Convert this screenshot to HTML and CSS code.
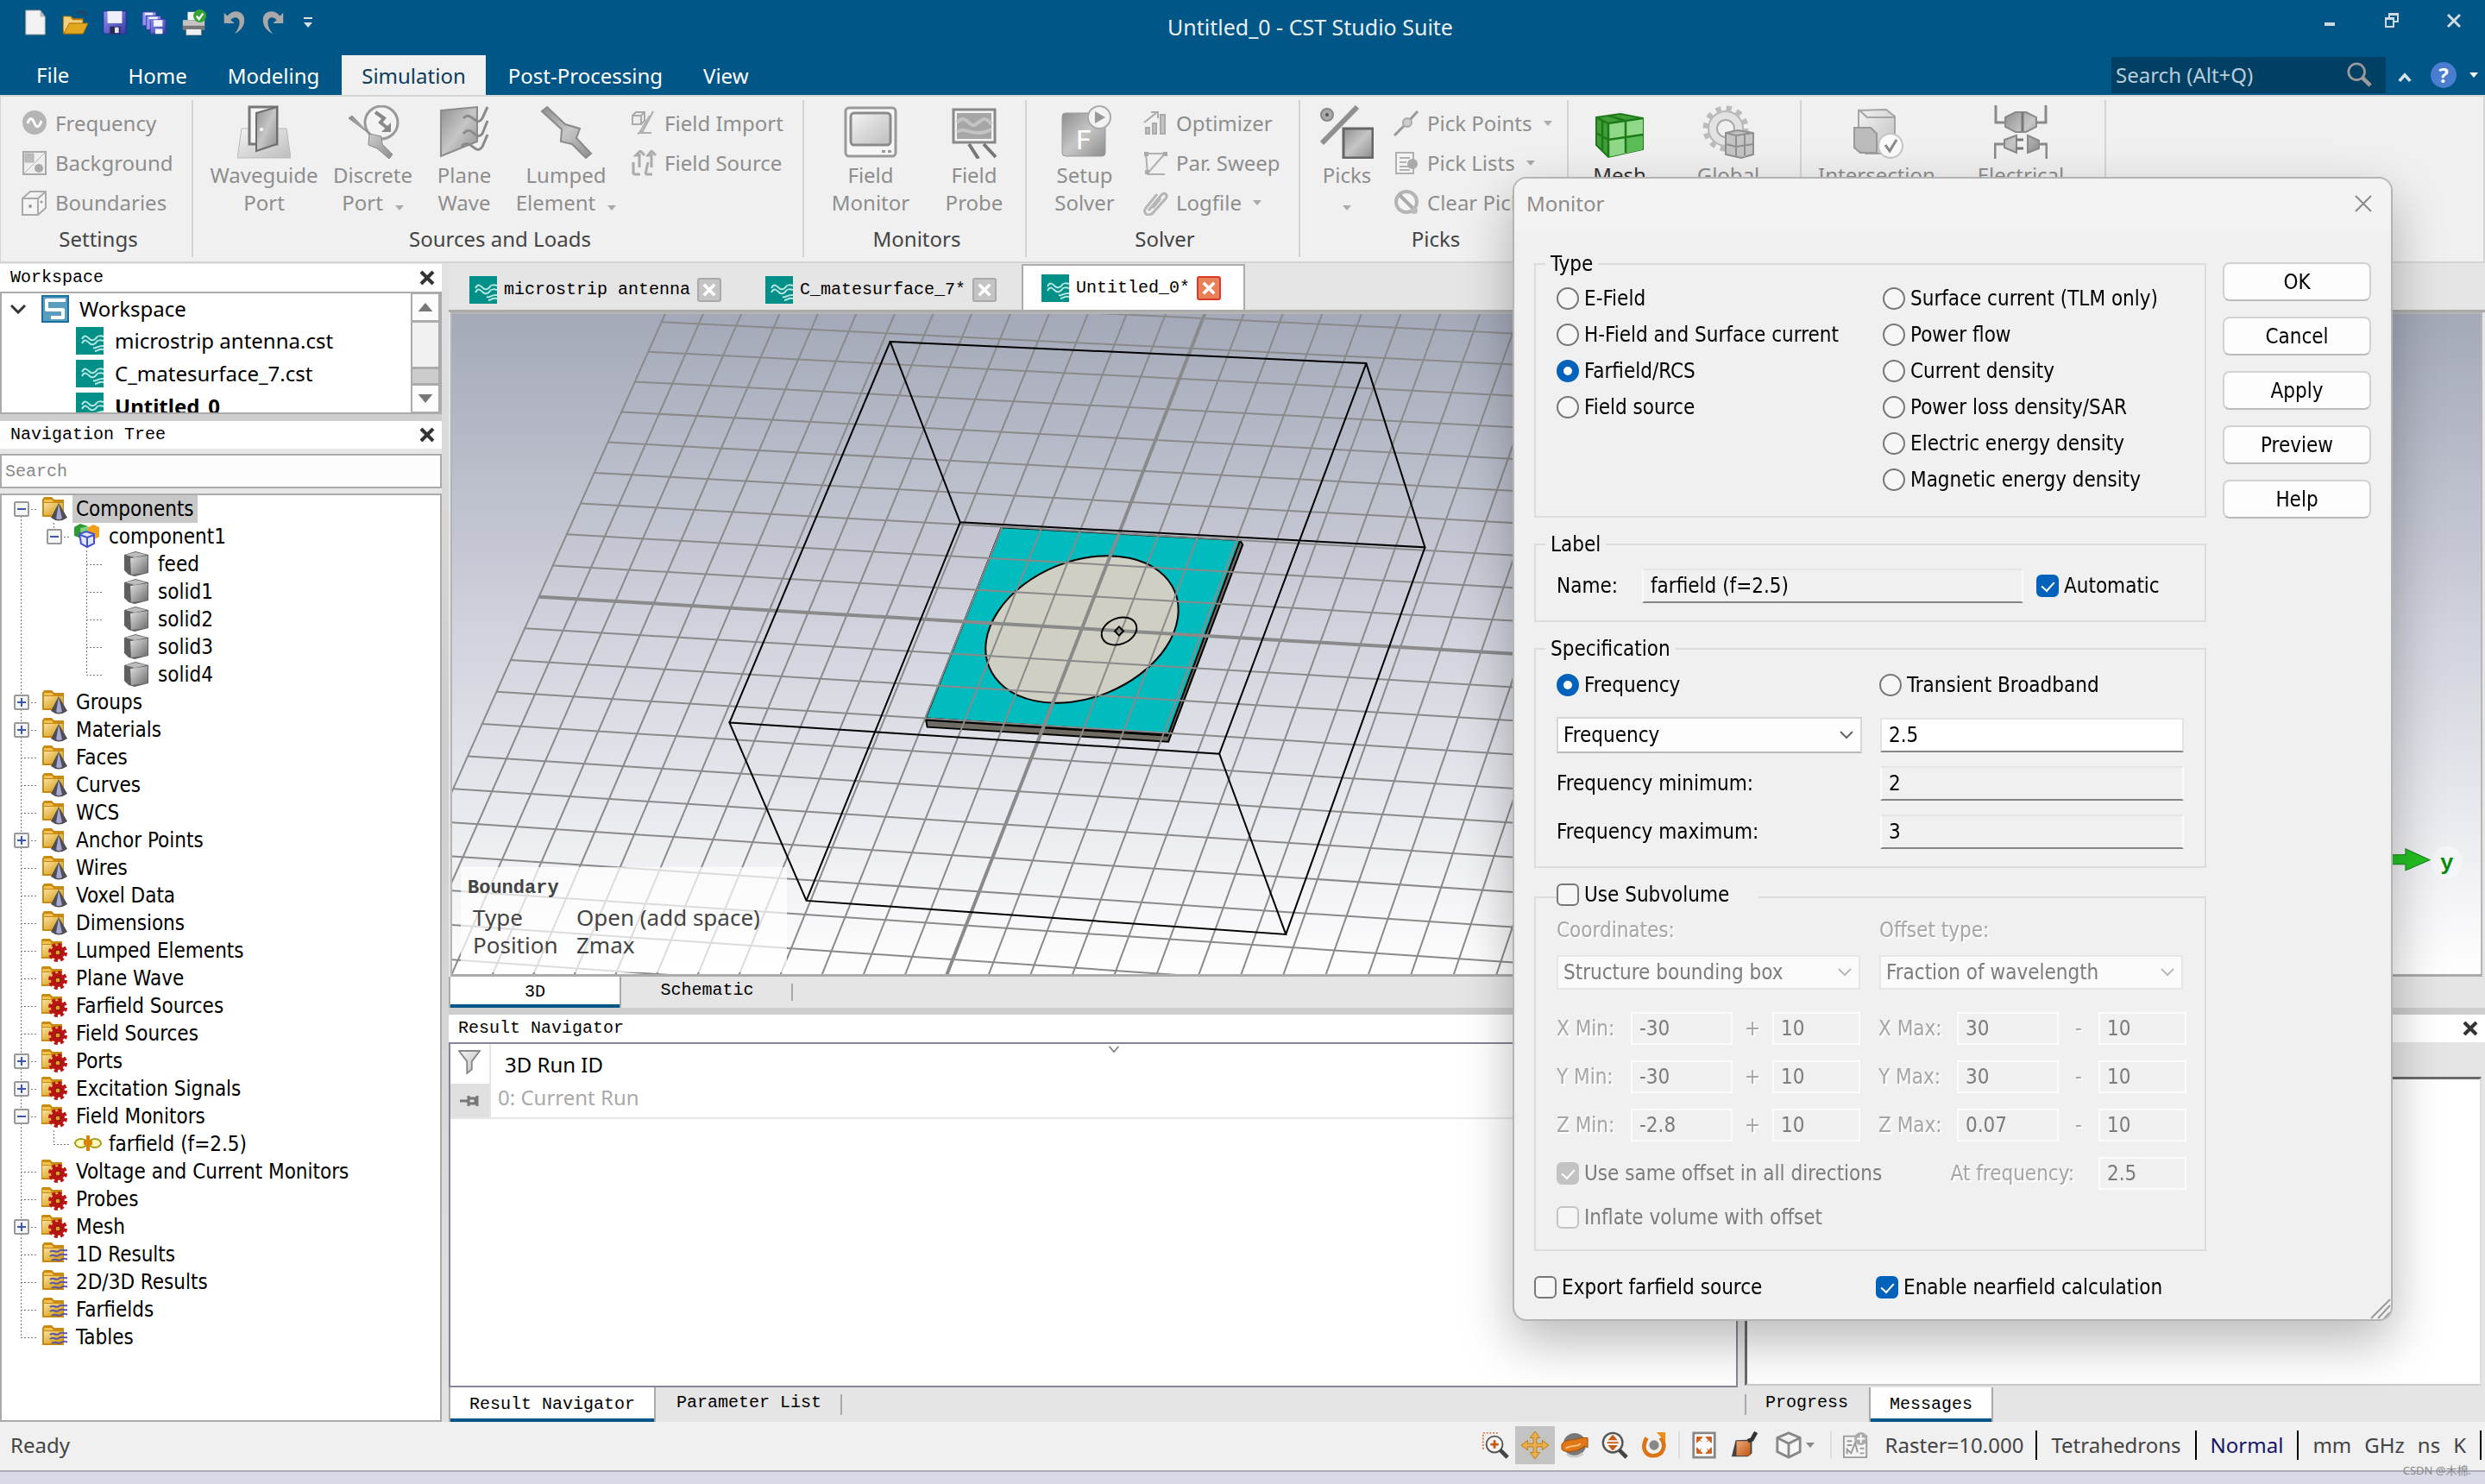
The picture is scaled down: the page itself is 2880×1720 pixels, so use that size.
FILE: index.html
```html
<!DOCTYPE html>
<html lang="en">
<head>
<meta charset="utf-8">
<title>Untitled_0 - CST Studio Suite</title>
<link rel="stylesheet" href="styles.css">
</head>
<body>
<svg class="defs" aria-hidden="true">
  <defs>
    <linearGradient id="gGray" x1="0" y1="0" x2="1" y2="1"><stop offset="0" stop-color="#8f8f8f"/><stop offset=".5" stop-color="#c6c6c6"/><stop offset="1" stop-color="#8d8d8d"/></linearGradient>
    <linearGradient id="gLight" x1="0" y1="0" x2="1" y2="1"><stop offset="0" stop-color="#f4f4f4"/><stop offset="1" stop-color="#bdbdbd"/></linearGradient>
    <linearGradient id="gFold" x1="0" y1="0" x2="1" y2="1"><stop offset="0" stop-color="#f6dfa0"/><stop offset="1" stop-color="#d39400"/></linearGradient>
    <linearGradient id="gCube" x1="0" y1="0" x2="1" y2="1"><stop offset="0" stop-color="#e2e2e2"/><stop offset="1" stop-color="#6c6c6c"/></linearGradient>
    <linearGradient id="gOr" x1="0" y1="0" x2="1" y2="1"><stop offset="0" stop-color="#f0a878"/><stop offset="1" stop-color="#c05812"/></linearGradient>
    <linearGradient id="gSave" x1="0" y1="0" x2="1" y2="1"><stop offset="0" stop-color="#8e93ee"/><stop offset="1" stop-color="#3a3aa8"/></linearGradient>
    <symbol id="caret" viewBox="0 0 10 6"><path d="M0 0h10L5 6z" fill="currentColor"/></symbol>
    <symbol id="cross" viewBox="0 0 18 18"><path d="M2 2l14 14M16 2L2 16" stroke="currentColor" stroke-width="4" fill="none"/></symbol>
    <symbol id="wave" viewBox="0 0 32 32"><path d="M0 0h32v32H0z" fill="#009088"/><path d="M7 14c3-6 6-3 9 0s7 0 8-2 5-2 8-1M7 19c3-6 6-3 9 0s7 0 8-2 5-2 8-1M20 24c4 2 5-3 12-2M22 28c3 0 4-3 10-2" fill="none" stroke="#b8e6e3" stroke-width="2"/></symbol>
    <symbol id="folder" viewBox="0 0 32 32"><path d="M1 4l2-3h9l3 3h11v20H1z" fill="#c98a10"/><path d="M3 4h9l2 3H3z" fill="#f0c050"/><path d="M3 8h22v14H3z" fill="url(#gFold)"/></symbol>
    <symbol id="f-cone" viewBox="0 0 32 32"><use href="#folder"/><path d="M20 8l10 17q-10 7-19 0z" fill="#4e4e54"/><path d="M20 9l4 17q-4 2-7 0z" fill="#a8a8d6"/></symbol>
    <symbol id="f-gear" viewBox="0 0 32 32"><use href="#folder" x="-2"/><circle cx="19" cy="17" r="8" fill="#b81414"/><circle cx="19" cy="17" r="9" fill="none" stroke="#b81414" stroke-width="4" stroke-dasharray="4 3.07"/><circle cx="19" cy="17" r="3" fill="#e0a020" stroke="#7c0c0c"/></symbol>
    <symbol id="f-wave" viewBox="0 0 32 32"><use href="#folder"/><path d="M10 12c4-4 6 2 10-1s6 0 10-1M10 17c4-4 6 2 10-1s6 0 10-1M12 22c4-4 7 2 11-1s4 0 7-1" fill="none" stroke="#5a55a0" stroke-width="2"/></symbol>
    <symbol id="solid" viewBox="0 0 32 32"><path d="M1 4L14 0l15 4v21L13 29 6 27 1 22z" fill="#5f5f5f"/><path d="M2 4l12-3 13 3-14 3z" fill="#bdbdbd"/><path d="M8 8l20-3v20L9 27z" fill="url(#gCube)"/></symbol>
    <symbol id="comp" viewBox="0 0 32 32"><path d="M15 5l7-4 7 3v11l-7 4-7-4z" fill="#f2a018"/><path d="M0 4l7-4 9 3v10l-8 4-8-3z" fill="#2f9a34"/><path d="M7 5l9-2v10l-8 4z" fill="#7fd47f"/><path d="M6 12l8-3 9 3v11l-8 4-7-4z" fill="#dfe6ff" stroke="#4450c8" stroke-width="2"/><path d="M7 13l8 3 8-3M15 16v10" fill="none" stroke="#4450c8" stroke-width="2"/></symbol>
    <symbol id="far" viewBox="0 0 32 32"><ellipse cx="8" cy="14" rx="7" ry="5" fill="#fbf8c0" stroke="#a89c10" stroke-width="2"/><ellipse cx="24" cy="14" rx="7" ry="5" fill="#fbf8c0" stroke="#a89c10" stroke-width="2"/><path d="M14 5h4v6h3v5h-3v7h-4v-7h-3v-5h3z" fill="#dc8200"/></symbol>
  </defs>
</svg>

<div class="app">
<header class="titlebar">
  <div class="qat">
    <button aria-label="New"><svg viewBox="0 0 32 32"><path d="M4 1h18l6 8v22H4z" fill="#f2f2f2" stroke="#9a9a9a"/><path d="M22 1v8h6z" fill="#b8b8b8"/></svg></button>
    <button aria-label="Open"><svg viewBox="0 0 32 32"><path d="M1 8h10l3 3h12v19H1z" fill="#b87800"/><path d="M2 9h8l3 4h12v15H2z" fill="#f3cf7c"/><path d="M2 30l7-13h23l-6 13z" fill="#e3a820" stroke="#a06a00"/><path d="M18 5c3-4 9-4 11 2l2-3" fill="none" stroke="#2b3f55" stroke-width="2"/></svg></button>
    <button aria-label="Save"><svg viewBox="0 0 32 32"><path d="M2 2h28v28H4l-2-2z" fill="url(#gSave)" stroke="#2b2b8c"/><path d="M7 2h18v15H7z" fill="#eef0ff"/><path d="M10 21h13v9H10z" fill="#2a2a50"/><path d="M16 22h5v7h-5z" fill="#e4e4ee"/></svg></button>
    <button aria-label="Save all"><svg viewBox="0 0 32 32"><g stroke="#3a3aa0" fill="#8e93ee"><path d="M1 3h17v17H1z"/><path d="M6 8h18v17H6z"/><path d="M11 12h19v18H11z" fill="url(#gSave)"/></g><path d="M4 4h10v3H4zM9 9h11v3H9zM15 13h11v8H15zM17 24h9v6h-9z" fill="#f0f2ff"/></svg></button>
    <button aria-label="Print"><svg viewBox="0 0 32 32"><path d="M8 3h13v10H8z" fill="#f4f4f4"/><path d="M2 13h27v12H2z" fill="#c4c4c4"/><path d="M2 20h27v5H2z" fill="#777"/><path d="M6 24h19v8H6z" fill="#eee" stroke="#777"/><circle cx="23" cy="8" r="8" fill="#35a435"/><path d="M19 8l3 4 5-7" fill="none" stroke="#fff" stroke-width="2.5"/></svg></button>
    <button aria-label="Undo"><svg viewBox="0 0 32 32"><path d="M4 4v13h13l-5-4c4-5 11-4 11 3 0 5-2 9-6 14 8-4 12-10 12-17C29 1 15-1 8 8z" fill="#a9a9a9"/></svg></button>
    <button aria-label="Redo"><svg viewBox="0 0 32 32"><path d="M28 4v13H15l5-4c-4-5-11-4-11 3 0 5 2 9 6 14-8-4-12-10-12-17C3 1 17-1 24 8z" fill="#a9a9a9"/></svg></button>
    <button class="more" aria-label="Customize"><svg viewBox="0 0 10 12"><path d="M0 0h10v2H0zM0 6h10l-5 6z" fill="#d8e0e8"/></svg></button>
  </div>
  <h1>Untitled_0 - CST Studio Suite</h1>
  <div class="win">
    <button aria-label="Minimize"><svg viewBox="0 0 20 20"><path d="M4 12h12v4H4z" fill="#cfd9e0"/></svg></button>
    <button aria-label="Restore"><svg viewBox="0 0 20 20"><path d="M7 6V2h10v9h-4M3 8h9v9H3z" fill="none" stroke="#cfd9e0" stroke-width="2"/><path d="M2 6h11v3H2zM6 1h12v3H6z" fill="#cfd9e0"/></svg></button>
    <button aria-label="Close"><svg viewBox="0 0 20 20"><path d="M3 3l14 14M17 3L3 17" stroke="#cfd9e0" stroke-width="3"/></svg></button>
  </div>
</header>
<nav class="tabs">
  <button class="file">File</button><button>Home</button><button>Modeling</button><button class="on">Simulation</button><button>Post-Processing</button><button>View</button>
  <div class="find"><input type="search" placeholder="Search (Alt+Q)" aria-label="Search commands"><svg viewBox="0 0 32 32"><circle cx="13" cy="12" r="10" fill="none" stroke="#9a9a9a" stroke-width="3"/><path d="M20 19l10 10" stroke="#9a9a9a" stroke-width="5"/></svg></div>
  <button class="fold" aria-label="Collapse ribbon"><svg viewBox="0 0 18 14"><path d="M2 12l7-8 7 8" fill="none" stroke="#d7e2ea" stroke-width="4"/></svg></button>
  <button class="help" aria-label="Help"><span>?</span><svg viewBox="0 0 10 6"><use href="#caret"/></svg></button>
</nav>

<section class="ribbon">
  <div class="grp g-set"><div class="body">
    <div class="smalls">
      <button><svg viewBox="0 0 30 30"><circle cx="15" cy="14" r="14" fill="#b5b5b5"/><path d="M7 15c3-9 6-5 8 0s5 6 8-3" fill="none" stroke="#fff" stroke-width="3"/></svg>Frequency</button>
      <button><svg viewBox="0 0 30 30"><path d="M2 2h26v26H2z" fill="#eee" stroke="#a9a9a9" stroke-width="2"/><path d="M4 4h10v10H4zM28 2L2 28" fill="#bbb" stroke="#b5b5b5"/><circle cx="20" cy="21" r="5" fill="#aaa"/></svg>Background</button>
      <button><svg viewBox="0 0 30 30"><path d="M1 10l9-8h18v19l-9 8H1zM1 10h18l9-8M19 10v19" fill="#f4f4f4" stroke="#aaa" stroke-width="2"/><circle cx="10" cy="19" r="2" fill="#999"/><circle cx="23" cy="14" r="1.500" fill="#999"/></svg>Boundaries</button>
    </div></div><h2>Settings</h2></div>
  <div class="grp g-src"><div class="body">
    <button class="big w126"><svg viewBox="0 0 62 62"><path d="M5 27h52l5 34H0z" fill="url(#gLight)" stroke="#b9b9b9"/><path d="M14 2h32v43H14z" fill="#f4f4f4" stroke="#777" stroke-width="3"/><path d="M22 9l24-7v43l-24 8z" fill="url(#gGray)" stroke="#6d6d6d" stroke-width="2"/><circle cx="28" cy="28" r="2" fill="#fff"/></svg><span>Waveguide</span><span>Port</span></button>
    <button class="big w126"><svg viewBox="0 0 62 62"><circle cx="41" cy="20" r="19" fill="#f3f3f3" stroke="#999" stroke-width="3"/><path d="M34 8l10 7-4 5 10 8" fill="none" stroke="#888" stroke-width="4"/><path d="M52 20v11H41z" fill="#888"/><path d="M3 15L7 12l20 21 14 3 1 9 12 12-4 5-14-12-10-4 1-13z" fill="url(#gGray)" stroke="#8a8a8a"/></svg><span>Discrete</span><span>Port<svg class="dd"><use href="#caret"/></svg></span></button>
    <button class="big w86"><svg viewBox="0 0 62 62"><path d="M4 6l42-4v40L4 59z" fill="url(#gGray)" stroke="#8c8c8c" stroke-width="2"/><path d="M30 15c10-10 14 12 22 0l6-13M30 33c10-12 14 10 22 0l6-15M28 48c10-12 16 12 24 0l6-14" fill="none" stroke="#8a8a8a" stroke-width="3"/></svg><span>Plane</span><span>Wave</span></button>
    <button class="big w150"><svg viewBox="0 0 62 62"><path d="M3 7l6-5 21 20 17 5-4 11 17 18-6 5-16-16-13-3 1-14z" fill="url(#gGray)" stroke="#8a8a8a" stroke-width="2"/></svg><span>Lumped</span><span>Element<svg class="dd"><use href="#caret"/></svg></span></button>
    <div class="smalls">
      <button><svg viewBox="0 0 30 30"><path d="M2 6l4-4h10v10l-4 4H2zM2 6h10l4-4M12 6v10" fill="#eee" stroke="#aaa" stroke-width="2"/><path d="M26 1L14 24l-6 3M22 6L10 26h14" fill="none" stroke="#b0b0b0" stroke-width="2"/></svg>Field Import</button>
      <button><svg viewBox="0 0 30 30"><path d="M10 20V6H6l5-5 5 5M24 20V6h-4l4-5 5 5M3 28V14M3 28h8M17 28h8M17 28l3-14" fill="none" stroke="#aaa" stroke-width="3"/></svg>Field Source</button>
    </div></div><h2>Sources and Loads</h2></div>
  <div class="grp g-mon"><div class="body">
    <button class="big w154"><svg viewBox="0 0 62 62"><rect x="2" y="3" width="58" height="56" rx="4" fill="#f6f6f6" stroke="#999" stroke-width="3"/><rect x="8" y="9" width="46" height="37" rx="4" fill="url(#gLight)" stroke="#8b8b8b" stroke-width="3"/><path d="M44 52h4v3h-4zM51 52h4v3h-4z" fill="#999"/></svg><span>Field</span><span>Monitor</span></button>
    <button class="big w86"><svg viewBox="0 0 62 62"><path d="M7 5h48v38H7z" fill="#f4f4f4" stroke="#888" stroke-width="3"/><path d="M11 9h40v30H11z" fill="#a6a6a6"/><path d="M11 20c12-12 14 8 22 2s10-10 18 0M11 31c10-8 18 8 40-3" fill="none" stroke="#c4c4c4" stroke-width="4"/><path d="M25 45l11 17M42 45l14 15" stroke="#777" stroke-width="4"/></svg><span>Field</span><span>Probe</span></button>
    </div><h2>Monitors</h2></div>
  <div class="grp g-sol"><div class="body">
    <button class="big w134"><svg viewBox="0 0 62 62"><rect x="5" y="9" width="50" height="50" rx="4" fill="url(#gGray)" stroke="#999"/><text x="21" y="51" font-size="32" fill="#fff" font-family="Roboto">F</text><circle cx="48" cy="14" r="13" fill="#f2f2f2" stroke="#aaa" stroke-width="2"/><path d="M43 7l12 7-12 7z" fill="#999"/></svg><span>Setup</span><span>Solver</span></button>
    <div class="smalls">
      <button><svg viewBox="0 0 30 30"><path d="M2 14L16 3M10 2h8v7" fill="none" stroke="#aaa" stroke-width="2"/><path d="M4 20h4v7H4zM12 15h4v12h-4zM21 5h5v22h-5z" fill="#c4c4c4" stroke="#aaa" stroke-width="2"/></svg>Optimizer</button>
      <button><svg viewBox="0 0 30 30"><path d="M4 4h22L6 27zM6 28h20" fill="none" stroke="#b0b0b0" stroke-width="2"/><path d="M2 2h5v5H2zM24 2h5v5h-5zM3 23h5v5H3z" fill="#aaa"/></svg>Par. Sweep</button>
      <button><svg viewBox="0 0 30 30"><path d="M7 24L22 6c4-4 8 0 5 4L12 27c-6 5-12 0-8-6L17 5M12 21l9-11" fill="none" stroke="#b5b5b5" stroke-width="3"/></svg>Logfile<svg class="dd"><use href="#caret"/></svg></button>
    </div></div><h2>Solver</h2></div>
  <div class="grp g-pick"><div class="body">
    <button class="big w108"><svg viewBox="0 0 62 62"><circle cx="8" cy="11" r="7" fill="#aaa" stroke="#888" stroke-width="2"/><circle cx="8" cy="11" r="2" fill="#555"/><path d="M43 2L2 44" stroke="#909090" stroke-width="6"/><path d="M27 27h34v34H27z" fill="url(#gGray)" stroke="#666" stroke-width="3"/></svg><span>Picks</span><span class="only"><svg class="dd"><use href="#caret"/></svg></span></button>
    <div class="smalls">
      <button><svg viewBox="0 0 30 30"><path d="M28 1L18 12 12 18 1 29" fill="none" stroke="#999" stroke-width="3"/><circle cx="16" cy="14" r="5" fill="#ccc" stroke="#aaa" stroke-width="2"/></svg>Pick Points<svg class="dd"><use href="#caret"/></svg></button>
      <button><svg viewBox="0 0 30 30"><path d="M3 3h20v24H3z" fill="#f4f4f4" stroke="#b0b0b0" stroke-width="2"/><path d="M7 9h12M7 14h8M7 19h12M7 23h12" stroke="#b0b0b0" stroke-width="2"/><circle cx="22" cy="16" r="6" fill="#aaa"/></svg>Pick Lists<svg class="dd"><use href="#caret"/></svg></button>
      <button><svg viewBox="0 0 30 30"><circle cx="15" cy="14" r="12" fill="#f4f4f4" stroke="#b5b5b5" stroke-width="4"/><path d="M7 6l17 17" stroke="#aaa" stroke-width="4"/><circle cx="24" cy="24" r="4" fill="#bbb"/></svg>Clear Picks</button>
    </div></div><h2>Picks</h2></div>
  <div class="grp g-mesh"><div class="body">
    <button class="big live w118"><svg viewBox="0 0 62 62"><path d="M4 14l28-4 26 5v36l-40 9L4 46z" fill="#3f9f38" stroke="#1e7a18" stroke-width="2"/><path d="M18 21l40-6v36l-40 9z" fill="#8ed888"/><path d="M38 37l20-4v18l-20 4z" fill="#5cbc55"/><path d="M18 21v39M4 14l14 7 40-6M38 18v37M4 32l14 8 40-6M18 12l20 6M11 18v34" fill="none" stroke="#1e7a18" stroke-width="2.500"/></svg><span>Mesh</span></button>
    <button class="big w134"><svg viewBox="0 0 62 62"><circle cx="28" cy="27" r="20" fill="#e2e2e2" stroke="#b5b5b5" stroke-width="2"/><circle cx="28" cy="27" r="23" fill="none" stroke="#bbb" stroke-width="7" stroke-dasharray="6 6.040"/><circle cx="28" cy="27" r="10" fill="#f0f0f0" stroke="#aaa" stroke-width="2"/><path d="M28 32l14-3 18 3v25l-14 4-18-4z" fill="#c4c4c4" stroke="#909090" stroke-width="2"/><path d="M40 35v25M28 32l12 3 20-3M28 45l12 3 20-3M50 34v24" fill="none" stroke="#909090" stroke-width="2"/></svg><span>Global</span></button>
    </div></div>
  <div class="grp g-chk"><div class="body">
    <button class="big w174"><svg viewBox="0 0 62 62"><path d="M10 6l32-1 10 8v43H18l-8-8z" fill="url(#gLight)" stroke="#a5a5a5" stroke-width="2"/><path d="M10 5l10 9h32" fill="none" stroke="#a5a5a5" stroke-width="2"/><path d="M5 26h19l7 7v22H12l-7-6z" fill="#bcbcbc" stroke="#999" stroke-width="2"/><circle cx="47" cy="47" r="14" fill="#fafafa" stroke="#c4c4c4" stroke-width="2"/><path d="M41 46l5 7 8-13" fill="none" stroke="#888" stroke-width="3"/></svg><span>Intersection</span></button>
    <button class="big w160"><svg viewBox="0 0 62 62"><path d="M2 0v20h12M60 0v20H48M1 62V45h12M61 62V45H49" fill="none" stroke="#8a8a8a" stroke-width="3"/><path d="M13 14l12-6h12l12 6v11l-12 6H25l-12-6zM12 40l14-5v20l-14-6zM39 35l13 6v9l-13 5z" fill="url(#gGray)" stroke="#8a8a8a" stroke-width="2"/><path d="M33 8v22M26 40h8M26 50h8" stroke="#777" stroke-width="3"/></svg><span>Electrical</span></button>
    </div></div>
</section>

<main class="work">
  <aside class="dock">
    <div class="phead"><h3>Workspace</h3><button aria-label="Close Workspace"><svg><use href="#cross"/></svg></button></div>
    <div class="wsbox">
      <ul class="ws">
        <li class="root"><svg class="chev" viewBox="0 0 18 12"><path d="M1 2l8 8 8-8" fill="none" stroke="#333" stroke-width="3"/></svg><svg class="i32" viewBox="0 0 32 32"><path d="M1 1h30v30H1z" fill="#5b9dbf" stroke="#1a6f9e" stroke-width="2"/><path d="M28 6H6v11h19v9H11" fill="none" stroke="#fff" stroke-width="4" stroke-linejoin="round"/></svg>Workspace</li>
        <li><svg class="i32"><use href="#wave"/></svg>microstrip antenna.cst</li>
        <li><svg class="i32"><use href="#wave"/></svg>C_matesurface_7.cst</li>
        <li class="cur"><svg class="i32"><use href="#wave"/></svg>Untitled_0</li>
      </ul>
      <div class="sbar"><button aria-label="Scroll up"><svg viewBox="0 0 10 6"><path d="M0 6h10L5 0z" fill="#777"/></svg></button><i class="thumb"></i><i class="track"></i><button aria-label="Scroll down"><svg viewBox="0 0 10 6"><path d="M0 0h10L5 6z" fill="#777"/></svg></button></div>
    </div>
    <div class="phead nav"><h3>Navigation Tree</h3><button aria-label="Close Navigation Tree"><svg><use href="#cross"/></svg></button></div>
    <div class="navsearch"><input type="text" placeholder="Search" aria-label="Search tree"></div>
    <ul class="tree">
      <li><i class="g first"><b class="minus"></b></i><svg><use href="#f-cone"/></svg><span class="sel">Components</span></li>
      <li><i class="g v"></i><i class="g l"><b class="minus"></b></i><svg><use href="#comp"/></svg><span>component1</span></li>
      <li class="leaf"><i class="g v"></i><i class="g"></i><i class="g t"></i><svg><use href="#solid"/></svg><span>feed</span></li>
      <li class="leaf"><i class="g v"></i><i class="g"></i><i class="g t"></i><svg><use href="#solid"/></svg><span>solid1</span></li>
      <li class="leaf"><i class="g v"></i><i class="g"></i><i class="g t"></i><svg><use href="#solid"/></svg><span>solid2</span></li>
      <li class="leaf"><i class="g v"></i><i class="g"></i><i class="g t"></i><svg><use href="#solid"/></svg><span>solid3</span></li>
      <li class="leaf"><i class="g v"></i><i class="g"></i><i class="g l"></i><svg><use href="#solid"/></svg><span>solid4</span></li>
      <li><i class="g t"><b class="plus"></b></i><svg><use href="#f-cone"/></svg><span>Groups</span></li>
      <li><i class="g t"><b class="plus"></b></i><svg><use href="#f-cone"/></svg><span>Materials</span></li>
      <li><i class="g t"></i><svg><use href="#f-cone"/></svg><span>Faces</span></li>
      <li><i class="g t"></i><svg><use href="#f-cone"/></svg><span>Curves</span></li>
      <li><i class="g t"></i><svg><use href="#f-cone"/></svg><span>WCS</span></li>
      <li><i class="g t"><b class="plus"></b></i><svg><use href="#f-cone"/></svg><span>Anchor Points</span></li>
      <li><i class="g t"></i><svg><use href="#f-cone"/></svg><span>Wires</span></li>
      <li><i class="g t"></i><svg><use href="#f-cone"/></svg><span>Voxel Data</span></li>
      <li><i class="g t"></i><svg><use href="#f-cone"/></svg><span>Dimensions</span></li>
      <li><i class="g t"></i><svg><use href="#f-gear"/></svg><span>Lumped Elements</span></li>
      <li><i class="g t"></i><svg><use href="#f-gear"/></svg><span>Plane Wave</span></li>
      <li><i class="g t"></i><svg><use href="#f-gear"/></svg><span>Farfield Sources</span></li>
      <li><i class="g t"></i><svg><use href="#f-gear"/></svg><span>Field Sources</span></li>
      <li><i class="g t"><b class="plus"></b></i><svg><use href="#f-gear"/></svg><span>Ports</span></li>
      <li><i class="g t"><b class="plus"></b></i><svg><use href="#f-gear"/></svg><span>Excitation Signals</span></li>
      <li><i class="g t"><b class="minus"></b></i><svg><use href="#f-gear"/></svg><span>Field Monitors</span></li>
      <li><i class="g v"></i><i class="g l"></i><svg><use href="#far"/></svg><span>farfield (f=2.5)</span></li>
      <li><i class="g t"></i><svg><use href="#f-gear"/></svg><span>Voltage and Current Monitors</span></li>
      <li><i class="g t"></i><svg><use href="#f-gear"/></svg><span>Probes</span></li>
      <li><i class="g t"><b class="plus"></b></i><svg><use href="#f-gear"/></svg><span>Mesh</span></li>
      <li><i class="g t"></i><svg><use href="#f-wave"/></svg><span>1D Results</span></li>
      <li><i class="g t"></i><svg><use href="#f-wave"/></svg><span>2D/3D Results</span></li>
      <li><i class="g t"></i><svg><use href="#f-wave"/></svg><span>Farfields</span></li>
      <li><i class="g l"></i><svg><use href="#f-wave"/></svg><span>Tables</span></li>
    </ul>
  </aside>

  <div class="center">
    <div class="docs">
      <div class="doc"><svg class="i32"><use href="#wave"/></svg>microstrip antenna<button aria-label="Close tab"><svg><use href="#cross"/></svg></button></div>
      <div class="doc"><svg class="i32"><use href="#wave"/></svg>C_matesurface_7*<button aria-label="Close tab"><svg><use href="#cross"/></svg></button></div>
      <div class="doc on"><svg class="i32"><use href="#wave"/></svg>Untitled_0*<button aria-label="Close tab"><svg><use href="#cross"/></svg></button></div>
    </div>
    <div class="view">
      <svg class="scene" viewBox="525 365 2352 764" preserveAspectRatio="xMinYMin slice">
        <path d="M1161 612l276 15 3 5-86 228-279-17-2-10z" fill="#6f6a62" stroke="#000" stroke-width="2"/>
        <path d="M1161 612l276 15-83 224-281-18z" fill="#00bcbe" stroke="#000" stroke-width="2"/>
        <path d="M1073 834l281 18" fill="none" stroke="#000" stroke-width="4"/>
        <ellipse cx="1254" cy="730" rx="116" ry="79" transform="rotate(-22 1254 730)" fill="#d0cfc3" stroke="#000" stroke-width="2"/>
        <g id="grid" stroke="#8a8a8a" fill="none"></g>
        <ellipse cx="1297" cy="732" rx="21" ry="15" transform="rotate(-22 1297 732)" fill="none" stroke="#000" stroke-width="2"/>
        <path d="M1292 732l5-5 5 5-5 5z" fill="none" stroke="#000" stroke-width="2"/>
        <path d="M1032 397l551 25 68 213-538-29zM846 838l567 36 77 209-555-39zM1032 397L846 838M1583 422l-170 452M1651 635l-161 448M1113 606L935 1044" fill="none" stroke="#000" stroke-width="2"/>
        <path d="M2740 991h46v-7l28 13-28 12v-7h-46z" fill="#24c024" stroke="#108010"/>
        <ellipse cx="2834" cy="1000" rx="18" ry="19" fill="#f4f5f8"/>
        <text x="2826" y="1008" class="axis">y</text>
      </svg>
      <div class="info"><h4>Boundary</h4><dl><dt>Type</dt><dd>Open (add space)</dd><dt>Position</dt><dd>Zmax</dd></dl></div>
    </div>
    <div class="btabs"><button class="on w200">3D</button><button>Schematic</button></div>
    <div class="bottom">
      <section class="pane">
        <div class="phead"><h3>Result Navigator</h3></div>
        <div class="pbox">
          <svg class="sort" viewBox="0 0 14 10"><path d="M1 1l6 7 6-7" fill="none" stroke="#888" stroke-width="2"/></svg>
          <table>
            <tr class="h"><td><svg viewBox="0 0 28 30"><path d="M1 1h26L17 14v10l-6 5V14z" fill="url(#gLight)" stroke="#888" stroke-width="2"/></svg></td><th>3D Run ID</th></tr>
            <tr><td class="pin"><svg viewBox="0 0 24 14"><path d="M0 7h10M10 1v12M10 4h8v6h-8M20 1v12" fill="none" stroke="#777" stroke-width="3"/></svg></td><td>0: Current Run</td></tr>
          </table>
        </div>
        <div class="btabs"><button class="on w240">Result Navigator</button><button class="wide">Parameter List</button></div>
      </section>
      <section class="pane msg">
        <div class="phead"><h3></h3><button aria-label="Close Messages"><svg><use href="#cross"/></svg></button></div>
        <div class="pbox"></div>
        <div class="btabs"><button class="wide">Progress</button><button class="on w144">Messages</button></div>
      </section>
    </div>
  </div>
</main>

<footer class="status">
  <span class="ready">Ready</span>
  <div class="tools">
    <button aria-label="Zoom window"><svg viewBox="0 0 34 34"><path d="M2 22V2h18" fill="none" stroke="#d08050" stroke-width="2" stroke-dasharray="2 2"/><circle cx="16" cy="16" r="10" fill="#f6f6f6" stroke="#555" stroke-width="2"/><path d="M16 11v10M11 16h10" stroke="#c85a10" stroke-width="3"/><path d="M23 23l9 9" stroke="#444" stroke-width="5"/></svg></button>
    <button class="on" aria-label="Pan"><svg viewBox="0 0 34 34"><path d="M17 0l6 8h-4v7h7v-4l8 6-8 6v-4h-7v7h4l-6 8-6-8h4v-7H8v4l-8-6 8-6v4h7V8h-4z" fill="#eab050" stroke="#c07800"/></svg></button>
    <button aria-label="Rotate"><svg viewBox="0 0 34 34"><circle cx="17" cy="16" r="14" fill="#777"/><path d="M1 16c3-7 20-5 24-8h8v12l-4-2c-5 6-24 10-28 4z" fill="#e07818" stroke="#a04c00"/><path d="M6 21c6-5 14-1 18-6" fill="none" stroke="#f6c080" stroke-width="2"/><path d="M7 28c6 4 14 4 20-1" fill="none" stroke="#ccc" stroke-width="3"/></svg></button>
    <button aria-label="Zoom"><svg viewBox="0 0 34 34"><circle cx="15" cy="14" r="12" fill="#f6f6f6" stroke="#555" stroke-width="2.500"/><path d="M15 4l6 7H9zM15 24l6-7H9zM8 13h14v2H8z" fill="#c85a10"/><path d="M23 23l9 9" stroke="#444" stroke-width="5"/></svg></button>
    <button aria-label="Spin"><svg viewBox="0 0 34 34"><path d="M8 8C0 22 8 30 16 30c12 0 17-13 9-22" fill="none" stroke="#dc7414" stroke-width="5"/><path d="M20 1h11v12z" fill="#e89020"/><circle cx="17" cy="17" r="6" fill="#888"/></svg></button>
    <i></i>
    <button aria-label="Fit"><svg viewBox="0 0 34 34"><path d="M4 2h26v30H4z" fill="#fff" stroke="#888" stroke-width="3"/><path d="M8 7h7l-7 7zM26 7h-7l7 7zM8 27h7l-7-7zM26 27h-7l7-7zM9 8l5 5M25 8l-5 5M9 26l5-5M25 26l-5-5" fill="#d06020" stroke="#d06020" stroke-width="1"/></svg></button>
    <button aria-label="Cutting plane"><svg viewBox="0 0 34 34"><path d="M2 31l5-20 20-1v17l-5 4z" fill="#444"/><path d="M8 12h17v18H8z" fill="url(#gOr)"/><path d="M22 12l5-2 5-9" fill="none" stroke="#333" stroke-width="5"/></svg></button>
    <button class="cube" aria-label="View"><svg viewBox="0 0 34 34"><path d="M17 2l14 6v17l-14 7L3 25V8zM3 8l14 7 14-7M17 15v17" fill="#f6f6f6" stroke="#888" stroke-width="3"/></svg><svg class="dd"><use href="#caret"/></svg></button>
    <i></i>
    <button aria-label="Report"><svg viewBox="0 0 34 34"><path d="M2 6h28v26H2z" fill="#f4f4f4" stroke="#999" stroke-width="2"/><path d="M6 12h6M6 17h6M6 28V22l5 5 5-13 3 12M22 21h5M22 27h5" stroke="#999" stroke-width="2" fill="none"/><circle cx="23" cy="9" r="8" fill="#aaa"/><path d="M23 4v10M18 9h10" stroke="#fff" stroke-width="2"/></svg></button>
  </div>
  <span class="cell">Raster=10.000</span><span class="cell tet">Tetrahedrons</span><span class="cell norm">Normal</span><span class="cell units"><span>mm</span><span>GHz</span><span>ns</span><span>K</span></span>
  <span class="mark">CSDN @木棉.</span>
</footer>
<div class="desk"></div>
</div>

<div class="dialog" role="dialog" aria-label="Monitor">
  <div class="dtitle"><span>Monitor</span><button aria-label="Close"><svg viewBox="0 0 20 20"><path d="M1 1l18 18M19 1L1 19" stroke="#8a8a8a" stroke-width="2"/></svg></button></div>
  <form class="dbody">
    <div class="groups">
      <fieldset class="type"><legend>Type</legend>
        <div><label><input type="radio" name="type">E-Field</label><label><input type="radio" name="type">H-Field and Surface current</label><label><input type="radio" name="type" checked>Farfield/RCS</label><label><input type="radio" name="type">Field source</label></div>
        <div><label><input type="radio" name="type">Surface current (TLM only)</label><label><input type="radio" name="type">Power flow</label><label><input type="radio" name="type">Current density</label><label><input type="radio" name="type">Power loss density/SAR</label><label><input type="radio" name="type">Electric energy density</label><label><input type="radio" name="type">Magnetic energy density</label></div>
      </fieldset>
      <fieldset class="lab"><legend>Label</legend>
        <label class="name" for="nm">Name:</label><input id="nm" class="box" type="text" value="farfield (f=2.5)" readonly><label><input type="checkbox" checked>Automatic</label>
      </fieldset>
      <fieldset class="spec"><legend>Specification</legend>
        <div class="r"><label><input type="radio" name="spec" checked>Frequency</label><label><input type="radio" name="spec">Transient Broadband</label></div>
        <div class="f"><select aria-label="Specification"><option>Frequency</option></select><input class="box edit" type="text" value="2.5" aria-label="Value"></div>
        <div class="f"><label for="fmin">Frequency minimum:</label><input id="fmin" class="box" type="text" value="2" readonly></div>
        <div class="f"><label for="fmax">Frequency maximum:</label><input id="fmax" class="box" type="text" value="3" readonly></div>
      </fieldset>
      <fieldset class="sub"><legend><label><input type="checkbox">Use Subvolume</label></legend>
        <div class="c"><label for="co">Coordinates:</label><label for="ot">Offset type:</label><select id="co" disabled><option>Structure bounding box</option></select><select id="ot" disabled><option>Fraction of wavelength</option></select></div>
        <div class="x"><label for="x1">X Min:</label><input id="x1" class="box" value="-30" disabled><span>+</span><input class="box" value="10" aria-label="X Min offset" disabled><label class="mx" for="x2">X Max:</label><input id="x2" class="box" value="30" disabled><span>-</span><input class="box" value="10" aria-label="X Max offset" disabled></div>
        <div class="x"><label for="y1">Y Min:</label><input id="y1" class="box" value="-30" disabled><span>+</span><input class="box" value="10" aria-label="Y Min offset" disabled><label class="mx" for="y2">Y Max:</label><input id="y2" class="box" value="30" disabled><span>-</span><input class="box" value="10" aria-label="Y Max offset" disabled></div>
        <div class="x"><label for="z1">Z Min:</label><input id="z1" class="box" value="-2.8" disabled><span>+</span><input class="box" value="10" aria-label="Z Min offset" disabled><label class="mx" for="z2">Z Max:</label><input id="z2" class="box" value="0.07" disabled><span>-</span><input class="box" value="10" aria-label="Z Max offset" disabled></div>
        <div class="s"><label class="dis"><input type="checkbox" checked disabled>Use same offset in all directions</label><label class="at" for="af">At frequency:</label><input id="af" class="box" value="2.5" disabled></div>
        <div class="i"><label class="dis"><input type="checkbox" disabled>Inflate volume with offset</label></div>
      </fieldset>
      <div class="last"><label><input type="checkbox">Export farfield source</label><label><input type="checkbox" checked>Enable nearfield calculation</label></div>
    </div>
    <div class="acts"><button type="button">OK</button><button type="button">Cancel</button><button type="button">Apply</button><button type="button">Preview</button><button type="button">Help</button></div>
  </form>
  <svg class="grip" viewBox="0 0 24 24"><path d="M1 23L23 1M9 23L23 8M16 23l7-7" stroke="#999" stroke-width="2"/></svg>
</div>
<script src="scene.js"></script>
</body>
</html>
```
FILE: styles.css
```css
* { box-sizing: border-box; }
:root {
  --ui: "Noto Sans", "Open Sans", sans-serif;
  --dlg: "DejaVu Sans Condensed", "DejaVu Sans", sans-serif;
  --mono: "Liberation Mono", "Noto Sans CJK SC", monospace;
  --blue: #005687;
  --line: #ababab;
}
html, body { margin: 0; height: 100%; }
body { font: 24px/32px var(--ui); color: #444; overflow: hidden; background: #f0f0f0; }
button, input, select { font: inherit; color: inherit; margin: 0; padding: 0; border: 0; background: none; border-radius: 0; }
h1, h2, h3, h4, ul, dl, dd { margin: 0; padding: 0; font-weight: normal; font-size: inherit; list-style: none; }
.defs { position: absolute; width: 0; height: 0; }
.app { display: flex; flex-direction: column; height: 100vh; }

.titlebar { display: flex; background: var(--blue); color: #e8f0f5; height: 62px; }
.qat { display: flex; padding-left: 18px; height: 52px; }
.qat button { width: 46px; display: grid; place-items: center; }
.qat svg { width: 30px; height: 30px; }
.qat .more { width: 33px; }
.qat .more svg { width: 10px; height: 12px; }
.titlebar h1 { flex: 1; text-align: center; font-size: 25px; line-height: 62px; }
.win { display: flex; height: 48px; }
.win button { width: 72px; display: grid; place-items: center; }
.win svg { width: 20px; height: 20px; }

.tabs { display: flex; gap: 1px; background: var(--blue); color: #fff; height: 48px; padding-top: 2px; align-items: stretch; }
.tabs > button { padding: 2px 23px 0; }
.tabs > .file { padding: 0 44px 0 42px; }
.tabs > .on { background: #f0f0f0; color: #0c3c5c; margin: 0 2px; }
.find { margin-left: auto; width: 318px; height: 42px; margin-top: 2px; background: #004064; display: flex; align-items: center; padding: 0 16px 0 5px; }
.find input { flex: 1; min-width: 0; color: #b9cbd8; outline: 0; }
.find input::placeholder { color: #b9cbd8; opacity: 1; }
.find svg { width: 30px; height: 30px; }
.tabs > .fold { width: 42px; padding: 0; }
.fold svg { width: 16px; height: 13px; }
.tabs > .help { width: 71px; padding: 0 8px; display: flex; align-items: center; justify-content: space-between; }
.help span { width: 30px; height: 30px; line-height: 30px; border-radius: 50%; background: #4a7cd0; font-weight: bold; }
.help svg { width: 10px; height: 6px; }

.ribbon { display: flex; height: 195px; border: 2px solid #d4d4d4; border-left-width: 1px; padding: 4px 0 5px; background: #f0f0f0; box-shadow: 0 1px 0 #f6f6f6; color: #8e8e8e; }
.grp { border-right: 2px solid #d4d4d4; flex: none; padding-top: 4px; }
.g-set { width: 223px; } .g-src { width: 708px; } .g-mon { width: 258px; } .g-sol { width: 317px; }
.g-pick { width: 311px; } .g-mesh { width: 270px; } .g-chk { width: 353px; }
.grp .body { display: flex; height: 138px; }
.g-set .body { padding-left: 24px; }
.g-src .body { padding-left: 19px; }
.grp h2 { text-align: center; line-height: 38px; padding-left: 5px; color: #444; }
.smalls { display: flex; flex-direction: column; }
.smalls button { display: flex; align-items: center; gap: 9px; height: 46px; white-space: nowrap; }
.smalls svg { width: 30px; height: 30px; flex: none; }
.big { display: flex; flex-direction: column; align-items: center; padding-top: 2px; white-space: nowrap; flex: none; }
.big > svg { width: 62px; height: 62px; margin-bottom: 3px; }
.big .dd { margin-left: 14px; }
.big .only .dd { margin-left: 0; }
svg.dd { width: 10px; height: 6px; color: #aaa; }
.smalls svg.dd { width: 10px; height: 6px; margin-left: 4px; }
.live { color: #333; }
.w86 { width: 86px; } .w108 { width: 108px; } .w118 { width: 118px; } .w126 { width: 126px; } .w134 { width: 134px; }
.w150 { width: 150px; } .w154 { width: 154px; } .w160 { width: 160px; } .w174 { width: 174px; }

.work { flex: 1; min-height: 0; display: grid; grid-template-columns: 512px 1fr; gap: 8px; background: linear-gradient(#e2e2e2, #cdcdcd 40%, #e2e2e2); }
.dock { display: flex; flex-direction: column; min-height: 0; padding-top: 1px; background: #e6e6e6; }
.phead { display: flex; justify-content: space-between; align-items: center; height: 32px; flex: none; background: #fff; padding: 0 8px 0 12px; color: #000; }
.phead h3, .docs, .btabs, .info h4 { font-family: var(--mono); font-size: 20px; }
.phead button { display: grid; }
.phead svg { width: 18px; height: 18px; color: #333; }
.wsbox { flex: none; height: 142px; border: 2px solid var(--line); background: #fff; display: flex; overflow: hidden; }
.ws { flex: 1; color: #000; overflow: hidden; }
.ws li { height: 38px; display: flex; align-items: center; gap: 13px; padding-left: 86px; }
.ws .root { height: 36px; padding-left: 10px; gap: 12px; }
.ws .root .chev { width: 18px; height: 12px; margin-right: 6px; }
.ws .cur { font-weight: bold; }
.i32 { width: 32px; height: 32px; flex: none; }
.sbar { width: 34px; border: 2px solid var(--line); border-width: 1px 2px; background: var(--line); display: flex; flex-direction: column; gap: 3px; }
.sbar button { height: 30px; background: #fcfcfc; display: grid; place-items: center; flex: none; }
.sbar svg { width: 18px; height: 10px; }
.thumb { flex: 1; background: #f0f0f0; }
.track { height: 16px; background: #ccc; }
.nav { margin-top: 8px; box-shadow: 0 -8px #cdcdcd; }
.navsearch { padding: 6px 0; flex: none; }
.navsearch input { display: block; width: 100%; height: 40px; border: 2px solid var(--line); background: #fdfdfd; padding-left: 4px; font: 20px var(--mono); color: #000; }
.navsearch input::placeholder { color: #888; }
.tree { flex: 1; min-height: 0; border: 2px solid var(--line); background: #fff; padding: 0 0 0 4px; font-family: var(--dlg); color: #000; overflow: hidden; }
.tree li { display: flex; height: 32px; align-items: center; }
.tree svg { width: 32px; height: 32px; margin: 2px 4px 0; flex: none; }
.tree .leaf svg { margin-left: 23px; }
.tree span { padding: 0 4px; line-height: 32px; white-space: nowrap; }
.tree .sel { background: #c8c8c8; }
.g { width: 38px; height: 32px; flex: none; display: grid; place-items: center; background-repeat: no-repeat; --v: repeating-linear-gradient(#777 0 2px, transparent 2px 4px); --h: repeating-linear-gradient(90deg, #777 0 2px, transparent 2px 4px); }
.g.v { background-image: var(--v); background-size: 1px 32px; background-position: 18px 0; }
.g.t { background-image: var(--v), var(--h); background-size: 1px 32px, 20px 1px; background-position: 18px 0, 18px 16px; }
.g.l { background-image: var(--v), var(--h); background-size: 1px 16px, 20px 1px; background-position: 18px 0, 18px 16px; }
.g.first { background-image: var(--v), var(--h); background-size: 1px 16px, 20px 1px; background-position: 18px 16px, 18px 16px; }
.g b { width: 18px; height: 18px; border: 2px solid #999; border-radius: 2px; background: linear-gradient(#3a5aa8, #3a5aa8) center/10px 2px no-repeat, #f6f6f6; }
.g .plus { background: linear-gradient(#3a5aa8, #3a5aa8) center/10px 2px no-repeat, linear-gradient(#3a5aa8, #3a5aa8) center/2px 10px no-repeat, #f6f6f6; }

.center { display: flex; flex-direction: column; min-width: 0; min-height: 0; background: #e5e5e5; }
.docs { display: flex; height: 57px; flex: none; border-bottom: 3px solid var(--line); padding: 1px 0 0 2px; color: #000; }
.doc { display: flex; align-items: center; gap: 8px; padding: 6px 29px 0 22px; white-space: nowrap; }
.doc button { width: 28px; height: 28px; border: 2px solid #aaa; border-radius: 3px; background: #c4c4c4; color: #fff; display: grid; place-items: center; }
.doc svg:not(.i32) { width: 16px; height: 16px; }
.doc.on { background: #fff; border: 2px solid var(--line); border-bottom: 0; padding: 0 26px 0 21px; }
.doc.on button { background: #e8805a; border-color: #d83c28; }
.view { position: relative; flex: 1; min-height: 0; border: 2px solid #b5b5b5; border-bottom: 3px solid var(--line); margin: 0 3px 0 2px; background: linear-gradient(#a4a9b9, #d2d4de 50%, #fefefe); }
.scene { display: block; width: 100%; height: 100%; }
.axis { font: bold 26px "Liberation Mono", monospace; fill: #0a8a0a; }
.info { position: absolute; left: 10px; bottom: 2px; width: 378px; height: 122px; background: rgba(255,255,255,.7); padding: 8px 8px; color: #444; }
.info h4 { font-weight: bold; font-size: 22px; line-height: 34px; }
.info dl { display: grid; grid-template-columns: 120px 1fr; padding-left: 6px; font-size: 26px; }
.info dt { margin: 0; }
.btabs { display: flex; height: 36px; flex: none; color: #000; }
.btabs button { position: relative; width: 199px; padding-bottom: 4px; }
.btabs button:not(.on)::after { content: ""; position: absolute; right: 0; top: 8px; bottom: 8px; width: 2px; background: #aaa; }
.btabs .on { background: #fff; border: solid #aaa; border-width: 0 2px; padding-bottom: 0; box-shadow: inset 0 -4px var(--blue); }
.btabs .w200 { width: 200px; } .btabs .w240 { width: 240px; } .btabs .w144 { width: 144px; }
.bottom { flex: none; height: 480px; border-top: 8px solid #cdcdcd; display: grid; grid-template-columns: 1494fr 858fr; gap: 8px; }
.pane { display: flex; flex-direction: column; min-width: 0; }
.pane .btabs { height: 40px; }
.pane .btabs .wide { width: 216px; }
.pane .phead { padding-left: 11px; }
.pbox { position: relative; flex: 1; border: 2px solid #868694; background: #fff; }
.msg .pbox { margin: 40px 4px 2px 0; border: 3px solid #6a6a6a; border-right: 2px solid #ddd; border-bottom: 2px solid #ccc; }
.msg .btabs .wide { width: 144px; }
.msg .btabs .wide::after { right: auto; left: 0; }
.sort { position: absolute; left: 762px; top: 2px; width: 14px; height: 9px; }
.pbox table { border-collapse: collapse; width: 100%; }
.pbox td, .pbox th { padding: 0; text-align: left; font-weight: normal; }
.pbox tr { height: 40px; border-bottom: 2px solid #e5e5e5; }
.pbox .h { height: 46px; border: 0; }
.pbox td { color: #a9a9a9; padding: 0 0 7px 8px; line-height: 30px; }
.pbox td:first-child { width: 46px; border-right: 2px solid #e5e5e5; padding: 0; }
.pbox td:first-child svg { display: block; margin: auto; width: 26px; height: 28px; }
.pbox .h td:first-child { vertical-align: top; padding: 7px 2px 0 0; }
.pbox .h th { padding-left: 16px; color: #000; padding-top: 2px; }
.pbox .pin { background: #e0e0e0; }
.pbox td.pin svg { width: 24px; height: 14px; }

.status { position: relative; display: flex; align-items: center; height: 56px; flex: none; background: #f0f0f0; padding: 0 4px 3px 12px; }
.ready { flex: 1; }
.tools { display: flex; align-items: center; margin-right: 11px; }
.tools button { width: 46px; height: 44px; display: grid; place-items: center; }
.tools .on { background: #c3c3c3; }
.tools svg { width: 32px; height: 32px; }
.tools i { width: 2px; height: 32px; background: #ddd; margin: 0 5px; }
.tools .cube { width: 72px; padding-left: 10px; grid-template-columns: 38px 12px; }
.tools svg.dd { width: 10px; height: 6px; color: #888; }
.cell { border-right: 2px solid #000; padding-right: 14px; margin-right: 16px; line-height: 34px; }
.norm { color: #14146a; }
.cell.tet { padding-right: 16px; }
.cell.norm { padding-right: 16px; }
.cell.units { display: flex; gap: 15px; margin: 0; padding-right: 16px; }
.mark { position: absolute; right: 16px; bottom: -8px; font: 13px/16px var(--ui), "Noto Sans CJK SC"; color: #888; z-index: 1; }
.desk { height: 16px; flex: none; background: #d8dae8; border-top: 2px solid #aaacba; }

.dialog { position: fixed; right: 107px; top: 205px; width: 1020px; border: 2px solid #b4b4b4; border-radius: 16px; background: #f0f0f0; overflow: hidden; font: 24px/30px var(--dlg); color: #000; box-shadow: 0 24px 60px rgba(0,0,0,.28); padding-bottom: 16px; }
.dtitle { display: flex; justify-content: space-between; align-items: center; height: 60px; background: #f3f3f3; padding: 0 22px 3px 14px; color: #8c8c8c; font-family: var(--ui); }
.dtitle svg { width: 20px; height: 20px; display: block; }
.dbody { display: flex; gap: 19px; align-items: flex-start; padding: 24px 23px 0; }
.groups { width: 779px; flex: none; }
fieldset { border: 2px solid #dcdcdc; margin: 0 0 16px; padding: 4px 0 0 24px; min-width: 0; }
legend { padding: 0 6px; margin-left: -13px; }
fieldset label, .last label { display: inline-flex; align-items: center; white-space: nowrap; }
.type { display: grid; grid-template-columns: 378px 1fr; height: 309px; }
.type label { display: flex; height: 42px; }
input[type=radio], input[type=checkbox] { appearance: none; width: 26px; height: 26px; margin-right: 6px; flex: none; border: 2px solid #777; background: #f6f6f6; border-radius: 50%; display: grid; place-items: center; }
input[type=checkbox] { border-radius: 6px; }
input[type=radio]:checked { background: #fff; border: 8px solid #0062ba; }
input[type=checkbox]:checked { background: #0062ba; border-color: #0062ba; }
input[type=checkbox]:checked::after { content: ""; width: 7px; height: 12px; border: solid #fff; border-width: 0 2px 2px 0; transform: rotate(42deg); margin-top: -3px; }
input[type=checkbox]:disabled { border-color: #c3c3c3; }
input[type=checkbox]:disabled:checked { background: #c3c3c3; }
.box { height: 40px; min-width: 0; padding: 0 8px; border: 2px solid #fbfbfb; outline: 0; border-top-color: #e4e4e4; border-bottom-color: #868686; background: #f0f0f0; }
.box.edit { background: #fff; border-left-color: #e4e4e4; border-right-color: #e4e4e4; }
.box:disabled { height: 38px; border-color: #fbfbfb; color: #7c7c7c; opacity: 1; }
.lab { display: flex; align-items: center; padding: 13px 0 20px 24px; }
.lab .name { width: 99px; }
.lab .box { width: 442px; margin-right: 15px; }
.r { display: grid; grid-template-columns: 374px 1fr; height: 51px; padding-bottom: 9px; }
.f { display: grid; grid-template-columns: 354px 352px; justify-content: start; column-gap: 21px; align-items: center; height: 56px; }
.spec { padding: 6px 0 12px 24px; }
select { appearance: none; height: 42px; padding: 0 6px; border: 2px solid #d6d6d6; border-bottom-color: #bbb; background: #fdfdfd url("data:image/svg+xml,%3Csvg xmlns='http://www.w3.org/2000/svg' viewBox='0 0 16 10'%3E%3Cpath d='M1 1l7 7 7-7' fill='none' stroke='%23666' stroke-width='2'/%3E%3C/svg%3E") right 8px center/16px 10px no-repeat; }
select:disabled { color: #7c7c7c; opacity: 1; border-color: #e6e6e6; background-color: #fafafa; background-image: url("data:image/svg+xml,%3Csvg xmlns='http://www.w3.org/2000/svg' viewBox='0 0 16 10'%3E%3Cpath d='M1 1l7 7 7-7' fill='none' stroke='%23b8b8b8' stroke-width='2'/%3E%3C/svg%3E"); }
.sub { padding: 6px 0 14px 24px; color: #a6a6a6; margin-bottom: 21px; }
.sub legend { color: #000; padding: 0 34px 0 0; margin-left: 0; }
.sub > div label:not(.dis), .x span { text-shadow: 2px 2px #fff; }
.dis { color: #7c7c7c; }
.c { display: grid; grid-template-columns: 352px 352px; column-gap: 22px; row-gap: 14px; margin-bottom: 17px; }
.c select { height: 40px; }
.x { display: grid; grid-template-columns: 86px 118px 46px 102px 112px 118px 46px 102px; align-items: center; height: 56px; }
.x span { text-align: center; }
.x .mx { padding-left: 21px; }
.s { display: flex; align-items: center; height: 56px; width: 730px; }
.s .at { margin-left: auto; margin-right: 28px; }
.s .box { width: 102px; }
.i { height: 46px; display: flex; }
.last { display: grid; grid-template-columns: 396px 1fr; height: 42px; }
.acts { display: flex; flex-direction: column; gap: 18px; width: 172px; padding-top: 13px; }
.acts button { height: 45px; background: #fdfdfd; border: 2px solid #d2d2d2; border-bottom-color: #bbb; border-radius: 8px; }
.grip { position: absolute; right: 0; bottom: 0; width: 24px; height: 24px; }
```
FILE: scene.js
```js
// Draws the working-plane grid of the 3D view in perspective.
const grid = document.getElementById('grid');
const project = (u, v) => {
  const w = 1 - 0.0012 * u + 0.003236 * v;
  return [(44.14 * u + 18.52 * v + 1253.9) / w, (1.796 * u - 34.71 * v + 729) / w];
};
const addLine = (a, b, width) => {
  const line = document.createElementNS('http://www.w3.org/2000/svg', 'line');
  line.setAttribute('x1', a[0]);
  line.setAttribute('y1', a[1]);
  line.setAttribute('x2', b[0]);
  line.setAttribute('y2', b[1]);
  line.setAttribute('stroke-width', width);
  grid.append(line);
};
for (let i = -14; i <= 14; i++) {
  const width = i === 0 ? 4 : 2;
  addLine(project(i, -14), project(i, 14), width);
  addLine(project(-14, i), project(14, i), width);
}
```
